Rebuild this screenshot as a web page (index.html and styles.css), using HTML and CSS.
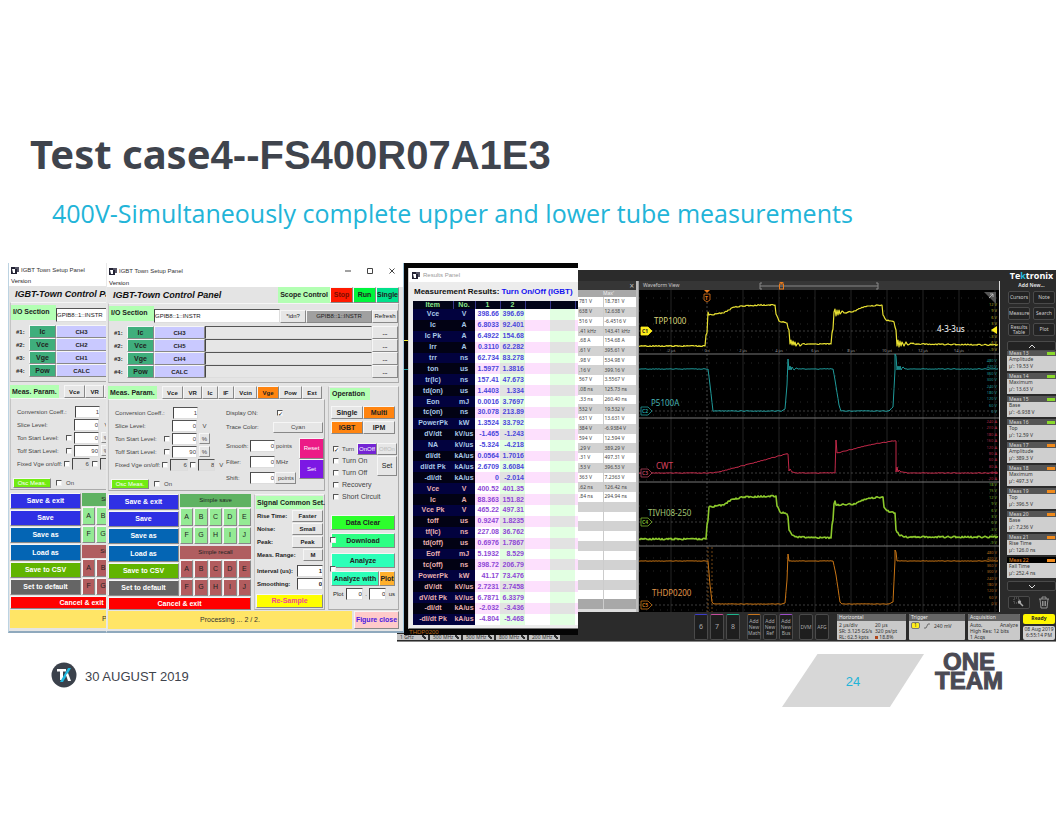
FILE: index.html
```
<!DOCTYPE html>
<html lang="en">

<head>
  <meta charset="UTF-8">
  <meta name="viewport" content="width=device-width, initial-scale=1.0">
  <title>Test case4--FS400R07A1E3</title>
  <link rel="stylesheet" href="styles.css">
</head>

<body>
  <div class="slide">
    <header class="slide-header">
      <h1>Test case<span class="part-no">4--FS400R07A1E3</span></h1>
      <h2>400V-Simultaneously complete upper and lower tube measurements</h2>
    </header>

    <main class="stage">
      <!-- oscilloscope -->
      <section class="scope">
        <div class="scope-main">
          <div class="scope-under"></div>
          <div class="scope-table">
            <div class="scope-bar"><button class="close" aria-label="Close table">×</button></div>
            <table>
              <thead><tr><th></th><th>Max'</th></tr></thead>
              <tbody id="scopeRows"></tbody>
            </table>
          </div>
          <div class="wave">
            <div class="scope-bar">
              <span>Waveform View</span>
              <svg class="wave-range" viewBox="0 0 120 8">
                <path d="M3 1H1V7H3M1 4H119M117 1H119V7H117" fill="none" stroke="#888" />
                <path d="M20 0h5l-2.500 2z" fill="#e87a1c" />
                <rect x="20.500" y="2" width="4" height="5" fill="none" stroke="#e87a1c" />
              </svg>
            </div>
            <svg id="plot" class="plot" viewBox="0 0 360 322"></svg>
          </div>
          <aside class="side">
            <div class="brand">Te<span class="brand-k">k</span>tronix</div>
            <div class="add-new">Add New...</div>
            <div class="side-buttons">
              <button>Cursors</button><button>Note</button>
              <button>Measure</button><button>Search</button>
              <button>Results<br>Table</button><button>Plot</button>
            </div>
            <button class="scroll" aria-label="Scroll up"><svg viewBox="0 0 8 5"><path d="M1 4L4 1L7 4" /></svg></button>
            <div class="meas-list" id="measList"></div>
            <button class="scroll" aria-label="Scroll down"><svg viewBox="0 0 8 5"><path d="M1 1L4 4L7 1" /></svg></button>
            <div class="side-tools">
              <button class="tool-zoom" aria-label="Zoom"><svg viewBox="0 0 12 10"><path d="M1 1H6V6H1Z" fill="none" stroke="#999" stroke-width=".7" stroke-dasharray="1 1" /><circle cx="6.500" cy="5" r="1.700" fill="#aaa" /><path d="M7 6L10 9" stroke="#aaa" stroke-width="1.500" /></svg></button>
              <button class="tool-trash" aria-label="Delete"><svg viewBox="0 0 12 13"><path d="M1 3H11M4 3V1H8V3M2 3L3 12H9L10 3M4.500 5V10M6 5V10M7.500 5V10" fill="none" stroke="#aaa" stroke-width=".8" /></svg></button>
            </div>
          </aside>
        </div>
        <div class="scope-bottom">
          <div class="bandwidths">
            <span>1 GHz<i></i></span><span>500 MHz<i></i></span><span>500 MHz<i></i></span><span>800 MHz<i></i></span><span>200 MHz<i></i></span>
          </div>
          <div class="channels">
            <button class="ch6">6</button><button class="ch7">7</button><button class="ch8">8</button>
            <button class="math">Add<br>New<br>Math</button><button class="ref">Add<br>New<br>Ref</button><button class="bus">Add<br>New<br>Bus</button>
            <button class="dvm">DVM</button><button class="afg">AFG</button>
          </div>
          <div class="badge badge-h"><h4>Horizontal</h4>
            <div><span>2 µs/div</span><span>20 µs</span></div>
            <div><span>SR: 3.125 GS/s</span><span>320 ps/pt</span></div>
            <div><span>RL: 62.5 kpts</span><span><i class="rec"></i> 18.8%</span></div>
          </div>
          <div class="badge badge-t"><h4>Trigger</h4>
            <p><span class="trig">1</span><svg viewBox="0 0 6 6"><path d="M0 5H2L4 1H6" fill="none" stroke="#555" stroke-width=".8" /></svg> 240 mV</p>
          </div>
          <div class="badge badge-a"><h4>Acquisition</h4>
            <div><span>Auto,</span><span>Analyze</span></div>
            <div><span>High Res: 12 bits</span></div>
            <div><span>1 Acqs</span></div>
          </div>
          <div class="state">
            <button class="ready">Ready</button>
            <div class="clock">08 Aug 2019<br>6:55:14 PM</div>
          </div>
        </div>
      </section>

      <!-- results window over its own scope capture -->
      <section class="results-back">
        <div class="back-edge"></div>
        <div class="results">
          <div class="titlebar"><svg class="app-icon" viewBox="0 0 8 8"><rect x="0" y="1" width="6" height="7" fill="#223" /><path d="M1 3h3v4H2z" fill="#fff" /><path d="M4 1h4v5H6V3H4z" fill="#556" /></svg><span>Results Panel</span></div>
          <div class="results-head">Measurement Results: <span>Turn On/Off (IGBT)</span></div>
          <table>
            <thead>
              <tr><th>Item</th><th>No.</th><th>1</th><th>2</th><th></th><th></th><th></th></tr>
            </thead>
            <tbody id="resultRows"></tbody>
          </table>
        </div>
        <div class="back-label">THDP0200</div>
      </section>

      <section class="setup setup-back" data-channels="CH3,CH2,CH1,CALC"></section>
      <section class="setup setup-front" data-channels="CH3,CH5,CH4,CALC"></section>
    </main>

    <footer class="slide-footer">
      <svg class="tek-logo" viewBox="0 0 26 26">
        <circle cx="13" cy="13" r="12.500" fill="#3b414b" />
        <path d="M6 7H15V9.500H12V18H9V9.500H6Z" fill="#fff" />
        <path d="M17 6H20L12 20H9Z" fill="#20b8de" />
        <path d="M15 13L17 11L20 19H17Z" fill="#fff" />
      </svg>
      <span class="date">30 AUGUST 2019</span>
      <span class="page-no">24</span>
      <span class="one-team">ONE<br>TEAM</span>
    </footer>
  </div>

  <template id="setupTemplate">
    <div class="titlebar">
      <svg class="app-icon" viewBox="0 0 8 8"><rect x="0" y="1" width="6" height="7" fill="#223" /><path d="M1 3h3v4H2z" fill="#fff" /><path d="M4 1h4v5H6V3H4z" fill="#556" /></svg>
      <span>IGBT Town Setup Panel</span>
      <div class="win-buttons">
        <button aria-label="Minimize"><svg viewBox="0 0 6 6"><path d="M0 3H6" /></svg></button>
        <button aria-label="Maximize"><svg viewBox="0 0 6 6"><path d="M.5 .5H5.500V5.500H.5Z" /></svg></button>
        <button aria-label="Close"><svg viewBox="0 0 6 6"><path d="M.5 .5L5.500 5.500M5.500 .5L.5 5.500" /></svg></button>
      </div>
    </div>
    <div class="menu">Version</div>
    <div class="setup-body">
      <div class="panel-head">
        <strong>IGBT-Town Control Panel</strong>
        <span class="tag">Scope Control</span>
        <button class="stop">Stop</button><button class="run">Run</button><button class="single">Single</button>
      </div>

      <div class="frame io">
        <div class="io-top">
          <span class="tag">I/O Section</span>
          <input type="text" value="GPIB8::1::INSTR" aria-label="Address">
          <button>*idn?</button><button class="dark">GPIB8::1::INSTR</button><button>Refresh</button>
        </div>
        <div class="io-rows">
          <span>#1:</span><button class="src">Ic</button><button class="chan"></button><input type="text" aria-label="Source 1"><button>...</button>
          <span>#2:</span><button class="src">Vce</button><button class="chan"></button><input type="text" aria-label="Source 2"><button>...</button>
          <span>#3:</span><button class="src">Vge</button><button class="chan"></button><input type="text" aria-label="Source 3"><button>...</button>
          <span>#4:</span><button class="src">Pow</button><button class="chan"></button><input type="text" aria-label="Source 4"><button>...</button>
        </div>
      </div>

      <div class="work">
        <div class="left">
          <div class="tabs">
            <span class="tag">Meas. Param.</span>
            <button>Vce</button><button>VR</button><button>Ic</button><button>IF</button><button>Vcin</button><button class="on">Vge</button><button>Pow</button><button>Ext</button>
          </div>
          <div class="frame param">
            <div class="param-left">
              <label class="row">Conversion Coeff.:<input class="num" type="text" value="1"></label>
              <label class="row">Slice Level:<input class="num" type="text" value="0"><span>V</span></label>
              <label class="row">Ton Start Level:<input type="checkbox"><input class="num" type="text" value="0"><button>%</button></label>
              <label class="row">Toff Start Level:<input type="checkbox"><input class="num" type="text" value="90"><button>%</button></label>
              <label class="row fixed">Fixed Vge on/off:<input type="checkbox"><input class="num" type="text" value="6"><input type="checkbox" aria-label="Fixed off"><input class="num" type="text" value="8" aria-label="Off voltage"><span>V</span></label>
              <div class="osc"><button>Osc Meas.</button><label><input type="checkbox"> On</label></div>
            </div>
            <div class="param-right">
              <label class="trace">Display ON:<input type="checkbox" checked></label>
              <div class="trace">Trace Color:<button>Cyan</button></div>
              <div class="filters">
                <div>
                  <label class="filter">Smooth:<input class="num" type="text" value="0"><span>points</span></label>
                  <label class="filter">Filter:<input class="num" type="text" value="0"><span>MHz</span></label>
                  <label class="filter">Shift:<input class="num" type="text" value="0"><button>points</button></label>
                </div>
                <div class="filter-set"><button class="reset">Reset</button><button class="set">Set</button></div>
              </div>
            </div>
          </div>
          <div class="lower">
            <div class="files">
              <div class="file-buttons">
                <button class="navy">Save &amp; exit</button>
                <button class="navy">Save</button>
                <button class="blue">Save as</button>
                <button class="blue">Load as</button>
                <button class="csv">Save to CSV</button>
                <button class="gray">Set to default</button>
              </div>
              <div class="slots">
                <div class="slot save"><span>Simple save</span><button>A</button><button>B</button><button>C</button><button>D</button><button>E</button><button>F</button><button>G</button><button>H</button><button>I</button><button>J</button></div>
                <div class="slot recall"><span>Simple recall</span><button>A</button><button>B</button><button>C</button><button>D</button><button>E</button><button>F</button><button>G</button><button>H</button><button>I</button><button>J</button></div>
              </div>
              <button class="cancel">Cancel &amp; exit</button>
            </div>
            <div class="frame signal">
              <span class="tag">Signal Common Set.</span>
              <div class="sig">Rise Time:<button>Faster</button></div>
              <div class="sig">Noise:<button>Small</button></div>
              <div class="sig">Peak:<button>Peak</button></div>
              <div class="sig short">Meas. Range:<button>M</button></div>
              <label class="sig">Interval (us):<input class="num" type="text" value="1"></label>
              <label class="sig">Smoothing:<input class="num" type="text" value="0"></label>
              <button class="resample">Re-Sample</button>
            </div>
          </div>
        </div>

        <div class="frame operation">
          <span class="tag">Operation</span>
          <div class="pair"><button>Single</button><button class="on">Multi</button><button class="on">IGBT</button><button>IPM</button></div>
          <div class="modes">
            <label><input type="checkbox" checked>Turn</label>
            <label><input type="checkbox">Turn On</label>
            <label><input type="checkbox">Turn Off</label>
            <label><input type="checkbox">Recovery</label>
            <label><input type="checkbox">Short Circuit</label>
            <div class="mode-set"><button class="onoff">OnOff</button><button class="offon" disabled>OffOn</button><button class="mset">Set</button></div>
          </div>
          <button class="act clear">Data Clear</button>
          <div class="act-row"><button class="act down">Download</button><input type="checkbox" aria-label="Auto download"></div>
          <button class="act analyze">Analyze</button>
          <div class="act-row split"><button class="act analyze">Analyze with</button><button class="act plotb">Plot</button><input type="checkbox" aria-label="Auto analyze"></div>
          <div class="plot-range">Plot <input class="num" type="text" value="0" aria-label="Plot from"> . <input class="num" type="text" value="0" aria-label="Plot to"> us</div>
        </div>
      </div>

      <div class="status"><span>Processing ... 2 / 2.</span><button>Figure close</button></div>
    </div>
  </template>

  <script src="script.js"></script>
</body>

</html>
```
FILE: styles.css
```
* {
  box-sizing: border-box;
}

body {
  margin: 0;
  background: #fff;
  color: #222;
  font-family: "Liberation Sans", Arial, sans-serif;
}

button,
input {
  margin: 0;
  padding: 0;
  font: inherit;
  color: inherit;
  border-radius: 0;
  min-width: 0;
}

.slide {
  min-height: 100vh;
}

.slide-header {
  padding: 127px 30px 0;
}

h1 {
  margin: 0;
  color: #3f444d;
  font: bold 40px/54px "Noto Sans", sans-serif;
}

.part-no {
  font-family: "Liberation Sans", Arial, sans-serif;
}

h2 {
  margin: 13px 0 0 22px;
  color: #22b4d8;
  font: normal 25px/36px "Open Sans", "Noto Sans", sans-serif;
}

/* stage holding the overlapping windows */
.stage {
  position: relative;
  height: 380px;
  margin-top: 32px;
  overflow: hidden;
}

.frame {
  border: 1px solid #aaa;
  border-top-color: #f5f5f5;
  border-left-color: #c4c4c4;
}

.tag {
  background: #b3ffb3;
  font-weight: bold;
  font-size: 7px;
  white-space: nowrap;
  padding: 0 2px;
}

.app-icon {
  width: 8px;
  height: 8px;
}

/* setup panel */
.setup {
  position: absolute;
  top: 0;
  width: 298px;
  height: 370px;
  display: flex;
  flex-direction: column;
  background: #fff;
  border-bottom: 2px solid #8fa9bd;
  border-right: 1px solid #9fc3d8;
  font-size: 6px;
  line-height: 8px;
}

.setup-back {
  left: 8px;
  border-left: 1px solid #bcd3e2;
}

.setup-front {
  left: 106px;
  border-left: 1px solid #e8e8e8;
}

.titlebar {
  display: flex;
  align-items: center;
  gap: 2px;
  height: 16px;
  flex: none;
  padding-left: 2px;
  font-size: 6px;
  color: #333;
}

.setup-back .titlebar {
  height: 14px;
}

.win-buttons {
  display: flex;
  gap: 16px;
  margin: 0 8px 0 auto;
}

.setup .win-buttons button {
  width: 6px;
  height: 6px;
  display: flex;
  border: 0;
  background: none;
}

.win-buttons svg {
  width: 6px;
  height: 6px;
}

.win-buttons path {
  fill: none;
  stroke: #444;
  stroke-width: 1;
}

.menu {
  height: 9px;
  padding-left: 2px;
}

.setup-body {
  flex: 1;
  display: flex;
  flex-direction: column;
  padding: 0 4px 2px 1px;
  background: #e4e4e4;
}

.setup button {
  border: 1px solid #888;
  border-top-color: #f6f6f6;
  border-left-color: #f6f6f6;
  background: #e6e6e6;
  white-space: nowrap;
  line-height: 8px;
  text-align: center;
}

.setup input[type="text"] {
  border: 1px solid #ddd;
  border-top-color: #555;
  border-left-color: #444;
  background: #fff;
  height: 12px;
}

.setup .num {
  text-align: right;
}

.setup input[type="checkbox"] {
  appearance: none;
  width: 6px;
  height: 6px;
  flex: none;
  background: #fff;
  border: 1px solid #eee;
  border-top-color: #555;
  border-left-color: #555;
}

.setup input[type="checkbox"]:checked::before {
  content: "✓";
  display: block;
  color: #000;
  font: bold 6px/5px "DejaVu Sans", sans-serif;
}

.setup .panel-head {
  display: flex;
  height: 16px;
  flex: none;
}

.panel-head strong {
  flex: 1;
  padding-left: 5px;
  font: italic bold 9px/16px "Liberation Sans", Arial, sans-serif;
  color: #111;
  white-space: nowrap;
}

.panel-head .tag {
  line-height: 16px;
}

.panel-head button {
  width: 23px;
  font-weight: bold;
  font-size: 7px;
}

.setup .stop {
  background: #ff1a00;
  color: #7a0d00;
}

.setup .run {
  background: #00f53c;
}

.setup .single {
  background: #00e08c;
}

.io {
  height: 80px;
  flex: none;
}

.io-top {
  display: flex;
  align-items: center;
}

.io-top .tag {
  height: 15px;
  line-height: 14px;
  width: 45px;
}

.io-top input {
  flex: 1;
  margin-top: 5px;
}

.setup .io-top input {
  height: 14px;
}

.io-top button {
  height: 13px;
  width: 26px;
  margin-top: 5px;
}

.setup .io-top .dark {
  width: 66px;
  background: #a0a0a0;
}

.io-rows {
  display: grid;
  grid-template-columns: 13px 27px 51px 1fr 26px;
  grid-auto-rows: 13px;
  align-items: center;
  margin-top: 3px;
  padding-left: 5px;
  font-weight: bold;
}

.io-rows > button {
  height: 13px;
  font-weight: bold;
}

.setup .io-rows input {
  height: 13px;
  background: #e6e6e6;
}

.setup .io-rows .src {
  background: #3fae7c;
  font-size: 7px;
}

.setup .io-rows .chan {
  background: #c9c9ff;
}

.work {
  display: grid;
  grid-template-columns: minmax(0, 1fr) 71px;
  gap: 3px;
  margin-top: 3px;
}

.left {
  display: flex;
  flex-direction: column;
}

.tabs {
  display: flex;
  height: 13px;
  padding-right: 3px;
}

.tabs .tag {
  line-height: 13px;
  margin-right: 5px;
}

.tabs button {
  flex: 1 1 auto;
  font-size: 6px;
  font-weight: bold;
}

.setup .on {
  background: #ff8410;
}

.param {
  display: grid;
  grid-template-columns: 111px minmax(0, 1fr);
  height: 92px;
  padding: 6px 0 0 6px;
  color: #444;
}

.row {
  display: flex;
  align-items: center;
  gap: 2px;
  height: 13px;
  width: 83px;
  white-space: nowrap;
}

.row .num {
  width: 25px;
  margin-left: auto;
}

.row input[type="checkbox"] {
  margin: 0 -2px 0 auto;
}

.row input[type="checkbox"] + .num {
  margin-left: 2px;
}

.row > span,
.row > button {
  width: 11px;
  margin-right: -12px;
  text-align: center;
}

.row > button {
  height: 11px;
}

.row.fixed {
  width: 100px;
}

.row.fixed .num {
  width: 18px;
  background: #e0e0e0;
}

.row.fixed input[type="checkbox"] {
  margin-left: 0;
}

.row.fixed > span {
  width: 8px;
  margin-right: -10px;
}

.osc {
  display: flex;
  align-items: center;
  gap: 5px;
  margin: 8px 0 0 -4px;
}

.setup .osc button {
  width: 38px;
  height: 10px;
  background: #72ec12;
  color: #fff;
}

.osc label {
  display: flex;
  align-items: center;
  gap: 4px;
}

.trace {
  display: grid;
  grid-template-columns: 47px 50px;
  align-items: center;
  height: 14px;
}

.trace input {
  margin-left: 4px;
}

.trace button {
  height: 11px;
}

.filters {
  display: flex;
  justify-content: space-between;
  margin-top: 4px;
}

.filter {
  display: flex;
  align-items: center;
  height: 16px;
  white-space: nowrap;
}

.setup .filter .num {
  width: 25px;
  margin-left: auto;
}

.filter > span,
.filter > button {
  width: 21px;
  padding-left: 1px;
}

.filter > button {
  height: 12px;
}

.filters > div:first-child {
  width: 70px;
}

.filter-set {
  display: grid;
  width: 25px;
  height: 41px;
}

.setup .filter-set .reset {
  background: #ec1a86;
  color: #fff;
}

.setup .filter-set .set {
  background: #7c18e4;
  color: #fff;
}

.lower {
  display: grid;
  grid-template-columns: 143px minmax(0, 1fr);
  gap: 3px;
  height: 116px;
  margin-top: 3px;
}

.files {
  display: grid;
  grid-template-columns: 71px 1fr;
  grid-template-rows: 1fr 13px;
  gap: 1px;
}

.file-buttons {
  display: grid;
  gap: 1px;
}

.file-buttons button,
.cancel {
  color: #fff;
  font-weight: bold;
  font-size: 7px;
}

.setup .navy {
  background: #2f30e4;
}

.setup .blue {
  background: #0465b4;
}

.setup .csv {
  background: #61b400;
}

.setup .gray {
  background: #656565;
}

.setup .cancel {
  grid-column: 1 / 3;
  background: #f00;
}

.slots {
  display: grid;
  gap: 2px;
}

.slot {
  display: grid;
  grid-template-columns: repeat(5, 1fr);
  grid-template-rows: 13px 1fr 1fr;
  gap: 1px;
  font-size: 7px;
}

.slot span {
  grid-column: 1 / 6;
  line-height: 13px;
  text-align: center;
  font-size: 6px;
}

.save span {
  background: #5fb262;
}

.setup .save button {
  background: #94ea94;
}

.recall span {
  background: #b05e60;
}

.setup .recall button {
  background: #b25c5e;
}

.signal {
  padding: 1px 1px 0;
  display: flex;
  flex-direction: column;
}

.signal .tag {
  line-height: 13px;
  padding: 0 1px;
}

.sig {
  display: flex;
  align-items: center;
  justify-content: space-between;
  height: 13px;
  padding-left: 1px;
  font-weight: bold;
  white-space: nowrap;
}

.sig button {
  width: 31px;
  height: 12px;
  font-weight: bold;
}

.sig.short {
  margin-bottom: 3px;
}

.sig.short button {
  width: 20px;
}

.sig input {
  width: 26px;
}

.setup .resample {
  margin: auto 0 1px;
  height: 14px;
  background: #ff0;
  color: #f0449a;
  font-weight: bold;
  font-size: 7px;
}

.operation {
  padding: 1px 3px 0 2px;
}

.operation .tag {
  display: block;
  width: 40px;
  line-height: 12px;
  margin-left: -1px;
}

.pair {
  display: grid;
  grid-template-columns: 1fr 1fr;
  gap: 2px 0;
  margin-top: 6px;
}

.pair button {
  height: 13px;
  font-size: 7px;
  font-weight: bold;
}

.modes {
  position: relative;
  margin-top: 9px;
}

.modes label {
  display: flex;
  align-items: center;
  gap: 3px;
  height: 12px;
  padding-left: 2px;
  font-size: 7px;
  white-space: nowrap;
  color: #444;
}

.modes label:first-child {
  font-size: 6px;
}

/* mode buttons lie over the check box list */
.mode-set {
  position: absolute;
  top: 0;
  right: -2px;
  width: 40px;
  display: grid;
  grid-template-columns: 1fr 1fr;
}

.mode-set button {
  height: 12px;
}

.setup .onoff {
  background: #7424d4;
  color: #fff;
}

.setup .offon {
  color: #bbb;
}

.setup .mset {
  grid-column: 2;
  height: 20px;
  margin-top: 1px;
  font-size: 7px;
}

.act {
  display: block;
  width: 100%;
  height: 15px;
  font-weight: bold;
  font-size: 7px;
}

.setup .clear {
  margin-top: 12px;
  background: #2cff2c;
}

.act-row {
  position: relative;
  display: flex;
  margin: 3px 0 5px;
}

.act-row input {
  position: absolute;
  left: -1px;
  top: 4px;
}

.act-row.split {
  margin-bottom: 2px;
}

.act-row.split input {
  top: -5px;
}

.setup .down {
  background: #2cff84;
}

.setup .analyze {
  background: #2cffb8;
}

.setup .plotb {
  width: 16px;
  flex: none;
  background: #ffb02c;
}

.plot-range {
  display: flex;
  align-items: center;
  justify-content: space-between;
  padding-left: 2px;
}

.plot-range input {
  width: 17px;
}

.status {
  display: flex;
  gap: 2px;
  height: 18px;
  margin-top: 1px;
  flex: none;
}

.status span {
  flex: 1;
  background: #ffe566;
  color: #333;
  font-size: 7px;
  line-height: 18px;
  text-align: center;
}

.setup .status button {
  width: 45px;
  background: #ffcaca;
  color: #4a18e0;
  font-size: 7px;
  font-weight: bold;
}

/* results window */
.results-back {
  position: absolute;
  left: 404px;
  top: 0;
  width: 174px;
  height: 372px;
  background: #050505;
  padding: 5px 0 0 4px;
  overflow: hidden;
}

.back-edge {
  position: absolute;
  left: 0;
  top: 77px;
  width: 4px;
  height: 30px;
  border-top: 1px solid #f5f032;
  border-bottom: 1px solid #1f9a9a;
}

.back-label {
  margin-left: 1px;
  color: #b8671a;
  font: 6px/6px "Liberation Sans", Arial, sans-serif;
}

.results {
  height: 361px;
  padding-left: 4px;
  background: #ececec;
  border-left: 1px solid #ccc;
  border-bottom: 1px solid #777;
}

.results .titlebar {
  height: 14px;
  margin-left: -4px;
  padding-left: 3px;
  gap: 3px;
  background: #fff;
  color: #999;
}

.results-head {
  padding-left: 1px;
  font: bold 8px/19px "Liberation Sans", Arial, sans-serif;
  color: #111;
  white-space: nowrap;
}

.results-head span {
  color: #1414f0;
}

.results table {
  width: 165px;
  height: 324px;
  table-layout: fixed;
  border-collapse: collapse;
  background: #fff;
  font-size: 7px;
  line-height: 8px;
  font-weight: bold;
}

.results th,
.results td {
  padding: 0;
  width: 25px;
  text-align: right;
  white-space: nowrap;
}

.results th {
  background: #020418;
  color: #8ce88c;
  text-align: center;
  border-right: 1px solid #35358a;
}

.results th:first-child {
  width: 40px;
}

.results th:nth-child(2) {
  width: 22px;
}

.results th:last-child {
  width: 4px;
}

.results td {
  padding-right: 1px;
  color: #4b46dc;
}

.results .item {
  padding: 0;
  background: #02023e;
  color: #a9c8e8;
  text-align: center;
}

.results tr:nth-child(even) .item {
  background: #020214;
}

.results .off {
  color: #8e46d6;
}

.results .item.off {
  color: #e8b0b0;
}

.results tr:nth-child(even) td:not(.item) {
  background: #fde0fd;
}

.results td:nth-child(4),
.results td:nth-child(6) {
  background: #e2ffe2;
}

.results tbody tr:nth-child(even) td:nth-child(4):not(.item),
.results tbody tr:nth-child(even) td:nth-child(6):not(.item) {
  background: #e2e2e2;
}

/* scope */
.scope {
  position: absolute;
  left: 397px;
  right: 0;
  top: 7px;
  background: #2b2b2b;
  color: #ccc;
  font: 5px/7px "Noto Sans", sans-serif;
}

.scope-main {
  display: flex;
}

.scope-under {
  width: 181px;
  flex: none;
}

.scope-table {
  width: 60px;
  flex: none;
  margin-top: 11px;
  background: #ddd;
  border-right: 2px solid #bbb;
}

.scope-bar {
  display: flex;
  align-items: center;
  height: 9px;
  padding-left: 4px;
  background: #363636;
}

.scope-bar .close {
  margin: 0 2px 0 auto;
  border: 0;
  background: none;
  color: #bbb;
  font-size: 8px;
  line-height: 8px;
}

.scope-table table {
  width: 100%;
  height: 319px;
  border-collapse: collapse;
  background: #fff;
  color: #444;
}

.scope-table th {
  background: #a8a8a8;
  color: #eee;
  font-weight: normal;
  text-align: left;
  padding: 0;
}

.scope-table td {
  padding: 0 0 0 1px;
  line-height: 7px;
  border-left: 1px solid #ccc;
  white-space: nowrap;
}

.scope-table td:first-child {
  width: 25px;
  border: 0;
}

.scope-table tbody tr:nth-child(even) {
  background: #d2d2d2;
}

.scope-table tbody tr:last-child {
  background: #a8a8a8;
}

.wave {
  flex: 1;
  margin-top: 11px;
  border-left: 1px solid #999;
  border-right: 1px solid #ddd;
}

.wave-range {
  width: 120px;
  height: 8px;
  margin-left: 80px;
}

.plot {
  display: block;
  width: 100%;
  background: #000;
}

.side {
  width: 56px;
  flex: none;
  padding-left: 7px;
}

.brand {
  color: #fff;
  font: bold 9px/11px "Open Sans", sans-serif;
  text-align: center;
}

.brand-k {
  color: #20b8de;
}

.add-new {
  text-align: center;
  font-weight: bold;
  font-size: 5px;
  line-height: 8px;
  color: #ddd;
}

.side-buttons {
  display: grid;
  grid-template-columns: 1fr 1fr;
  grid-auto-rows: 13px;
  gap: 3px;
  padding: 2px 1px 0;
}

.scope button {
  font-family: inherit;
}

.side-buttons button,
.scroll,
.tool-zoom {
  padding: 0;
  border: 1px solid #4a4a4a;
  border-radius: 2px;
  background: #232323;
  color: #ccc;
  line-height: 5px;
}

.scroll {
  display: flex;
  align-items: center;
  justify-content: center;
  width: 100%;
  height: 10px;
  margin-top: 5px;
}

.scroll svg {
  width: 8px;
  height: 5px;
}

.scroll path {
  fill: none;
  stroke: #ddd;
}

.meas-list {
  height: 229px;
  overflow: hidden;
  display: flex;
  flex-direction: column;
  justify-content: flex-end;
}

.meas {
  height: 23px;
  flex: none;
  padding-bottom: 2px;
}

.meas h5 {
  display: flex;
  align-items: center;
  justify-content: space-between;
  margin: 0;
  padding: 0 1px 0 2px;
  height: 6px;
  background: #555;
  font-weight: normal;
  font-size: 5px;
  line-height: 6px;
  color: #ddd;
}

.meas i {
  width: 8px;
  height: 3px;
  background: linear-gradient(90deg, #8ad92c 45%, #333 45%, #333 55%, #8ad92c 55%);
}

.meas.orange i {
  background: linear-gradient(90deg, #f08a1c 45%, #333 45%, #333 55%, #f08a1c 55%);
}

.meas.active h5 {
  background: #000;
  color: #f08a1c;
}

.meas p {
  margin: 0;
  padding: 0 2px;
  height: 15px;
  background: #cfcfcf;
  color: #333;
}

.meas-list + .scroll {
  margin-top: 1px;
}

.side-tools {
  display: flex;
  justify-content: space-between;
  align-items: center;
  padding: 5px 6px 0 1px;
}

.tool-zoom {
  width: 22px;
  height: 13px;
}

.side-tools svg {
  height: 10px;
}

.tool-trash {
  padding: 0;
  border: 0;
  background: none;
  height: 13px;
}

.side-tools .tool-trash svg {
  height: 13px;
}

.scope-bottom {
  display: flex;
  align-items: stretch;
  height: 30px;
  padding: 2px 1px 1px 0;
  border-bottom: 1px solid #888;
  background: #2b2b2b;
}

.bandwidths {
  display: flex;
  align-items: flex-end;
  gap: 2px;
  width: 297px;
  flex: none;
}

.bandwidths span {
  display: flex;
  justify-content: space-between;
  width: 31px;
  padding: 0 2px 0 3px;
  background: #c4c4c4;
  color: #333;
  line-height: 6px;
}

.bandwidths i {
  width: 4px;
  height: 4px;
  margin-top: 1px;
  background: linear-gradient(45deg, transparent 30%, #333 30%, #333 70%, transparent 70%);
}

.channels {
  display: flex;
  gap: 2px;
  width: 143px;
  flex: none;
}

.channels button {
  flex: none;
  width: 14px;
  padding: 0;
  border: 1px solid #4a4a4a;
  border-radius: 2px;
  background: #1e1e1e;
  color: #aaa;
  line-height: 6px;
}

.channels .ch6,
.channels .ch7,
.channels .ch8 {
  font-size: 7px;
}

.channels .ch6 {
  border-top-color: #3c3cc8;
}

.channels .ch7 {
  border-top-color: #c84c9c;
}

.channels .ch8 {
  border-top-color: #1cb48c;
}

.channels .math {
  margin-left: 5px;
  border-top-color: #c8741c;
}

.channels .bus {
  border-top-color: #9c4cc8;
}

.channels .dvm {
  margin-left: 4px;
}

.badge {
  overflow: hidden;
  border-radius: 1px;
  background: #c9c9c9;
  color: #333;
  line-height: 6px;
  margin-right: 3px;
}

.badge h4 {
  margin: 0 0 1px;
  padding-left: 2px;
  background: #666;
  color: #eee;
  font-weight: normal;
  font-size: 5px;
  line-height: 7px;
}

.badge div {
  display: grid;
  grid-template-columns: 36px 1fr;
  padding: 0 2px;
  white-space: nowrap;
}

.badge-h {
  width: 69px;
}

.badge-t {
  width: 56px;
}

.badge-a {
  flex: 1;
}

.badge-a div {
  grid-template-columns: auto auto;
  justify-content: space-between;
}

.badge p {
  display: flex;
  align-items: center;
  gap: 4px;
  margin: 0;
  padding: 0 2px;
}

.badge svg {
  width: 6px;
  height: 6px;
}

.trig {
  width: 9px;
  background: #ffee1c;
  border: 1px solid #777;
  border-radius: 2px;
  text-align: center;
  line-height: 5px;
}

.rec {
  display: inline-block;
  width: 3px;
  height: 3px;
  background: #b0461c;
}

.state {
  width: 32px;
  display: grid;
  gap: 2px;
}

.ready {
  border: 0;
  border-radius: 2px;
  background: #fff700;
  color: #222;
  font-weight: bold;
}

.clock {
  border-radius: 2px;
  background: #d0d0d0;
  color: #333;
  line-height: 6px;
  text-align: center;
}

/* svg text in the waveform view */
.plot text {
  font-family: "Noto Sans", sans-serif;
}

.plot .name {
  font-size: 8px;
}

.plot .scale {
  font-size: 4px;
  text-anchor: end;
}

.plot .time {
  font-size: 4px;
  text-anchor: middle;
  fill: #999;
}

.plot .mark {
  font-size: 5px;
  font-weight: bold;
}

/* footer */
.slide-footer {
  display: flex;
  align-items: flex-start;
  padding: 11px 53px 0 51px;
}

.tek-logo {
  width: 26px;
  height: 26px;
  margin-top: 8px;
}

.date {
  margin: 15px auto 0 8px;
  color: #3f444d;
  font-size: 13px;
  line-height: 16px;
}

.page-no {
  width: 142px;
  height: 53px;
  background: #d7d7d7;
  clip-path: polygon(25% 0, 100% 0, 76% 100%, 0 100%);
  color: #22b4d8;
  font-size: 13px;
  line-height: 55px;
  text-align: center;
}

.one-team {
  margin: -2px 0 0 11px;
  color: #4b4a54;
  font-weight: bold;
  font-size: 24px;
  line-height: 19px;
  text-align: center;
  -webkit-text-stroke: 1px #4b4a54;
}
```
FILE: script.js
```
const SVG_NS = 'http://www.w3.org/2000/svg';

// setup panels
const template = document.getElementById('setupTemplate');
document.querySelectorAll('.setup').forEach((panel) => {
  panel.appendChild(template.content.cloneNode(true));
  const channels = panel.dataset.channels.split(',');
  panel.querySelectorAll('.chan').forEach((button, i) => {
    button.textContent = channels[i];
  });
});

// results table, the first 16 rows are turn on
const results = [
  ['Vce', 'V', '398.66', '396.69'],
  ['Ic', 'A', '6.8033', '92.401'],
  ['Ic Pk', 'A', '6.4922', '154.68'],
  ['Irr', 'A', '0.3110', '62.282'],
  ['trr', 'ns', '62.734', '83.278'],
  ['ton', 'us', '1.5977', '1.3816'],
  ['tr(Ic)', 'ns', '157.41', '47.673'],
  ['td(on)', 'us', '1.4403', '1.334'],
  ['Eon', 'mJ', '0.0016', '3.7697'],
  ['tc(on)', 'ns', '30.078', '213.89'],
  ['PowerPk', 'kW', '1.3524', '33.792'],
  ['dV/dt', 'kV/us', '-1.465', '-1.243'],
  ['NA', 'kV/us', '-5.324', '-4.218'],
  ['dI/dt', 'kA/us', '0.0564', '1.7016'],
  ['dI/dt Pk', 'kA/us', '2.6709', '3.6084'],
  ['-dI/dt', 'kA/us', '0', '-2.014'],
  ['Vce', 'V', '400.52', '401.35'],
  ['Ic', 'A', '88.363', '151.82'],
  ['Vce Pk', 'V', '465.22', '497.31'],
  ['toff', 'us', '0.9247', '1.8235'],
  ['tf(Ic)', 'ns', '227.08', '36.762'],
  ['td(off)', 'us', '0.6976', '1.7867'],
  ['Eoff', 'mJ', '5.1932', '8.529'],
  ['tc(off)', 'ns', '398.72', '206.79'],
  ['PowerPk', 'kW', '41.17', '73.476'],
  ['dV/dt', 'kV/us', '2.7231', '2.7458'],
  ['dV/dt Pk', 'kV/us', '6.7871', '6.3379'],
  ['-dI/dt', 'kA/us', '-2.032', '-3.436'],
  ['-dI/dt Pk', 'kA/us', '-4.804', '-5.468'],
];
document.getElementById('resultRows').innerHTML = results.map((row, i) => {
  const off = i > 15 ? 'off' : '';
  return `<tr><td class="item ${off}">${row[0]}</td><td class="item ${off}">${row[1]}</td>` +
    `<td class="${off}">${row[2]}</td><td class="${off}">${row[3]}</td><td></td><td></td><td></td></tr>`;
}).join('');

// scope measurement table, padded with empty rows
const scopeRows = [
  ['781 V', '18.781 V'], ['638 V', '12.638 V'], ['516 V', '-6.4516 V'], ['.41 kHz', '143.41 kHz'],
  ['.68 A', '154.68 A'], ['.61 V', '395.61 V'], ['.98 V', '534.98 V'], ['.16 V', '399.16 V'],
  ['567 V', '3.5567 V'], ['.08 ns', '125.73 ns'], ['.33 ns', '260.40 ns'], ['532 V', '19.532 V'],
  ['631 V', '13.631 V'], ['384 V', '-6.9384 V'], ['594 V', '12.594 V'], ['.29 V', '389.29 V'],
  ['.31 V', '497.31 V'], ['.53 V', '396.53 V'], ['363 V', '7.2363 V'], ['.62 ns', '126.42 ns'],
  ['.84 ns', '294.94 ns'],
];
while (scopeRows.length < 32) scopeRows.push(['&nbsp;', '&nbsp;']);
document.getElementById('scopeRows').innerHTML = scopeRows
  .map((row) => `<tr><td>${row[0]}</td><td>${row[1]}</td></tr>`).join('');

// measurement badges
const meas = [
  [13, 'Amplitude', '19.53 V'], [14, 'Maximum', '13.63 V'], [15, 'Base', '-6.938 V'],
  [16, 'Top', '12.59 V'], [17, 'Amplitude', '389.3 V'], [18, 'Maximum', '497.3 V'],
  [19, 'Top', '396.5 V'], [20, 'Base', '7.236 V'], [21, 'Rise Time', '126.0 ns'],
  [22, 'Fall Time', '252.4 ns'],
];
document.getElementById('measList').innerHTML = meas.map(([no, name, value]) =>
  `<div class="meas ${no > 16 ? 'orange' : ''} ${no === 22 ? 'active' : ''}">` +
  `<h5>Meas ${no}<i></i></h5><p>${name}<br>µ': ${value}</p></div>`).join('');

// waveform view
const plot = document.getElementById('plot');

function add(tag, attrs, text) {
  const el = document.createElementNS(SVG_NS, tag);
  Object.entries(attrs).forEach(([key, value]) => el.setAttribute(key, value));
  if (text) el.textContent = text;
  plot.appendChild(el);
}

for (let x = 32; x < 360; x += 36) {
  add('path', { d: `M${x} 0V322`, stroke: x === 68 ? '#777' : '#3c3c3c', 'stroke-width': 0.6, 'stroke-dasharray': x === 68 ? '2 2' : 'none' });
}
for (let y = 8; y < 322; y += 13) {
  add('path', { d: `M0 ${y}H360`, stroke: '#333', 'stroke-width': 0.8, 'stroke-dasharray': '1 6' });
}
[64, 128, 192, 256].forEach((y) => add('path', { d: `M0 ${y}H360`, stroke: '#777', 'stroke-width': 1 }));
[41, 121, 183, 232, 315].forEach((y) => add('path', { d: `M0 ${y}H360`, stroke: '#666', 'stroke-width': 0.6, 'stroke-dasharray': '2 2' }));
['-2 µs', '0 s', '2 µs', '4 µs', '6 µs', '8 µs', '10 µs', '12 µs', '14 µs'].forEach((label, i) => {
  add('text', { x: 32 + i * 36, y: 62, class: 'time' }, label);
});

// points are x,y pairs, noise is the jitter height on the flat parts
const traces = [
  { color: '#e8e032', noise: 0.5, width: 1.2, pts: [0, 56, 66, 56, 67, 45, 68, 43, 69, 22, 70, 25, 84, 23, 90, 20, 95, 17, 105, 16, 120, 15, 136, 15, 137, 24, 140, 31, 148, 33, 149, 38, 150, 40, 151, 54, 152, 50, 153, 55, 154, 51, 155, 55, 156, 52, 157, 56, 159, 53, 161, 56, 163, 54, 192, 54, 193, 43, 194, 39, 195, 22, 196, 19, 197, 26, 198, 20, 199, 25, 200, 20, 201, 24, 203, 21, 205, 23, 216, 21, 222, 18, 230, 16, 243, 15, 244, 25, 247, 30, 255, 32, 256, 37, 257, 40, 258, 56, 259, 50, 260, 57, 261, 51, 262, 56, 263, 52, 265, 56, 267, 52, 269, 55, 272, 53, 276, 54, 359, 55] },
  { color: '#1f9a9a', noise: 0.3, width: 1, pts: [0, 79, 69, 79, 71, 95, 74, 121, 143, 121, 146, 119, 148, 95, 149, 69, 150, 80, 151, 76, 152, 80, 153, 77, 155, 80, 157, 78, 160, 79, 194, 79, 196, 90, 200, 115, 202, 121, 250, 121, 254, 117, 256, 80, 256, 64, 257, 66, 258, 80, 259, 76, 260, 80, 261, 76, 262, 80, 264, 77, 266, 79, 359, 79] },
  { color: '#c02848', noise: 0.3, width: 1, pts: [0, 183, 70, 183, 80, 182, 110, 174, 147, 164, 149, 164, 150, 181, 151, 179, 153, 182, 158, 183, 196, 183, 197, 150, 198, 163, 206, 161, 235, 154, 254, 151, 257, 151, 257, 182, 258, 177, 259, 182, 260, 180, 262, 182, 270, 183, 359, 183] },
  { color: '#8cc82c', noise: 0.7, width: 1.6, pts: [0, 249, 67, 249, 68, 235, 69, 230, 70, 217, 85, 215, 90, 211, 95, 209, 105, 207, 137, 206, 138, 216, 141, 222, 148, 224, 149, 227, 150, 240, 153, 245, 158, 247, 192, 248, 193, 235, 194, 230, 195, 214, 196, 211, 197, 215, 216, 214, 222, 211, 232, 208, 244, 207, 245, 217, 250, 222, 256, 223, 257, 240, 260, 245, 265, 247, 359, 247] },
  { color: '#c87414', noise: 0.2, width: 1, pts: [0, 271, 69, 271, 71, 295, 73, 312, 75, 314, 143, 314, 146, 313, 148, 290, 149, 264, 150, 271, 194, 271, 197, 285, 201, 312, 203, 314, 250, 314, 254, 312, 256, 270, 256, 260, 257, 262, 258, 271, 359, 271] },
];
traces.forEach(({ color, noise, width, pts }) => {
  let d = `M${pts[0]} ${pts[1]}`;
  for (let i = 2; i < pts.length; i += 2) {
    const [x0, y0, x1, y1] = pts.slice(i - 2, i + 2);
    for (let x = x0 + 1; x < x1; x++) {
      const y = y0 + (y1 - y0) * (x - x0) / (x1 - x0) + noise * Math.sin(x * x * 7.3);
      d += `L${x} ${y.toFixed(1)}`;
    }
    d += `L${x1} ${y1}`;
  }
  add('path', { d, fill: 'none', stroke: color, 'stroke-width': width, 'stroke-linejoin': 'round' });
});
add('path', { d: 'M69 257V322M73 257V322', stroke: '#a8641c', 'stroke-width': 0.7, 'stroke-dasharray': '2 2' });

// vertical scales: first value, step, count, first y
const scales = [
  ['#b8b02c', 'V', 12, 3, 8, 15],
  ['#1f9a9a', 'V', 480, 60, 9, 71],
  ['#b02848', 'A', 240, 30, 9, 132],
  ['#7cb42c', 'V', 18, 3, 10, 195],
  ['#b0681c', 'V', 480, 60, 9, 263],
];
scales.forEach(([color, unit, first, step, count, y]) => {
  for (let i = 0; i < count; i++) {
    add('text', { x: 358, y: y + 1 + Math.round(i * 6.4), class: 'scale', fill: color }, `${first - i * step} ${unit}`);
  }
});
add('text', { x: 358, y: 190, class: 'scale', fill: '#b02848' }, '-20 A');

[['C1', 41, '#ffee1c'], ['C2', 121, '#1f9a9a'], ['C3', 183, '#b04058'], ['C4', 232, '#7cb42c'], ['C5', 315, '#c87414']].forEach(([label, y, color], i) => {
  add('path', { d: `M2 ${y - 4}H9L13 ${y}L9 ${y + 4}H2Z`, fill: i ? '#000' : color, stroke: color, 'stroke-width': 0.8 });
  add('text', { x: 3, y: y + 2, class: 'mark', fill: i ? color : '#222' }, label);
});

add('text', { x: 15, y: 34, class: 'name', fill: '#d8d47c' }, 'TPP1000');
add('text', { x: 12, y: 116, class: 'name', fill: '#48b4b4' }, 'P5100A');
add('text', { x: 17, y: 179, class: 'name', fill: '#d8405c' }, 'CWT');
add('text', { x: 9, y: 226, class: 'name', fill: '#a4c474' }, 'TIVH08-250');
add('text', { x: 13, y: 306, class: 'name', fill: '#e0984c' }, 'THDP0200');
add('text', { x: 298, y: 42, class: 'name', fill: '#fff' }, '4-3-3us');

// trigger marker and level arrow
add('path', { d: 'M65 0H71L68 3Z', fill: '#e87a1c' });
add('path', { d: 'M65 4H71V10L68 12L65 10Z', fill: '#000', stroke: '#e87a1c', 'stroke-width': 0.8 });
add('text', { x: 66, y: 10, class: 'mark', fill: '#e87a1c' }, 'T');
add('path', { d: 'M352 40L358 36V44Z', fill: '#ffee1c' });
add('path', { d: 'M345 2H357V14Z', fill: '#555' });
add('path', { d: 'M350 8L354 4M351 4H354V7', fill: 'none', stroke: '#ccc', 'stroke-width': 0.8 });
```
